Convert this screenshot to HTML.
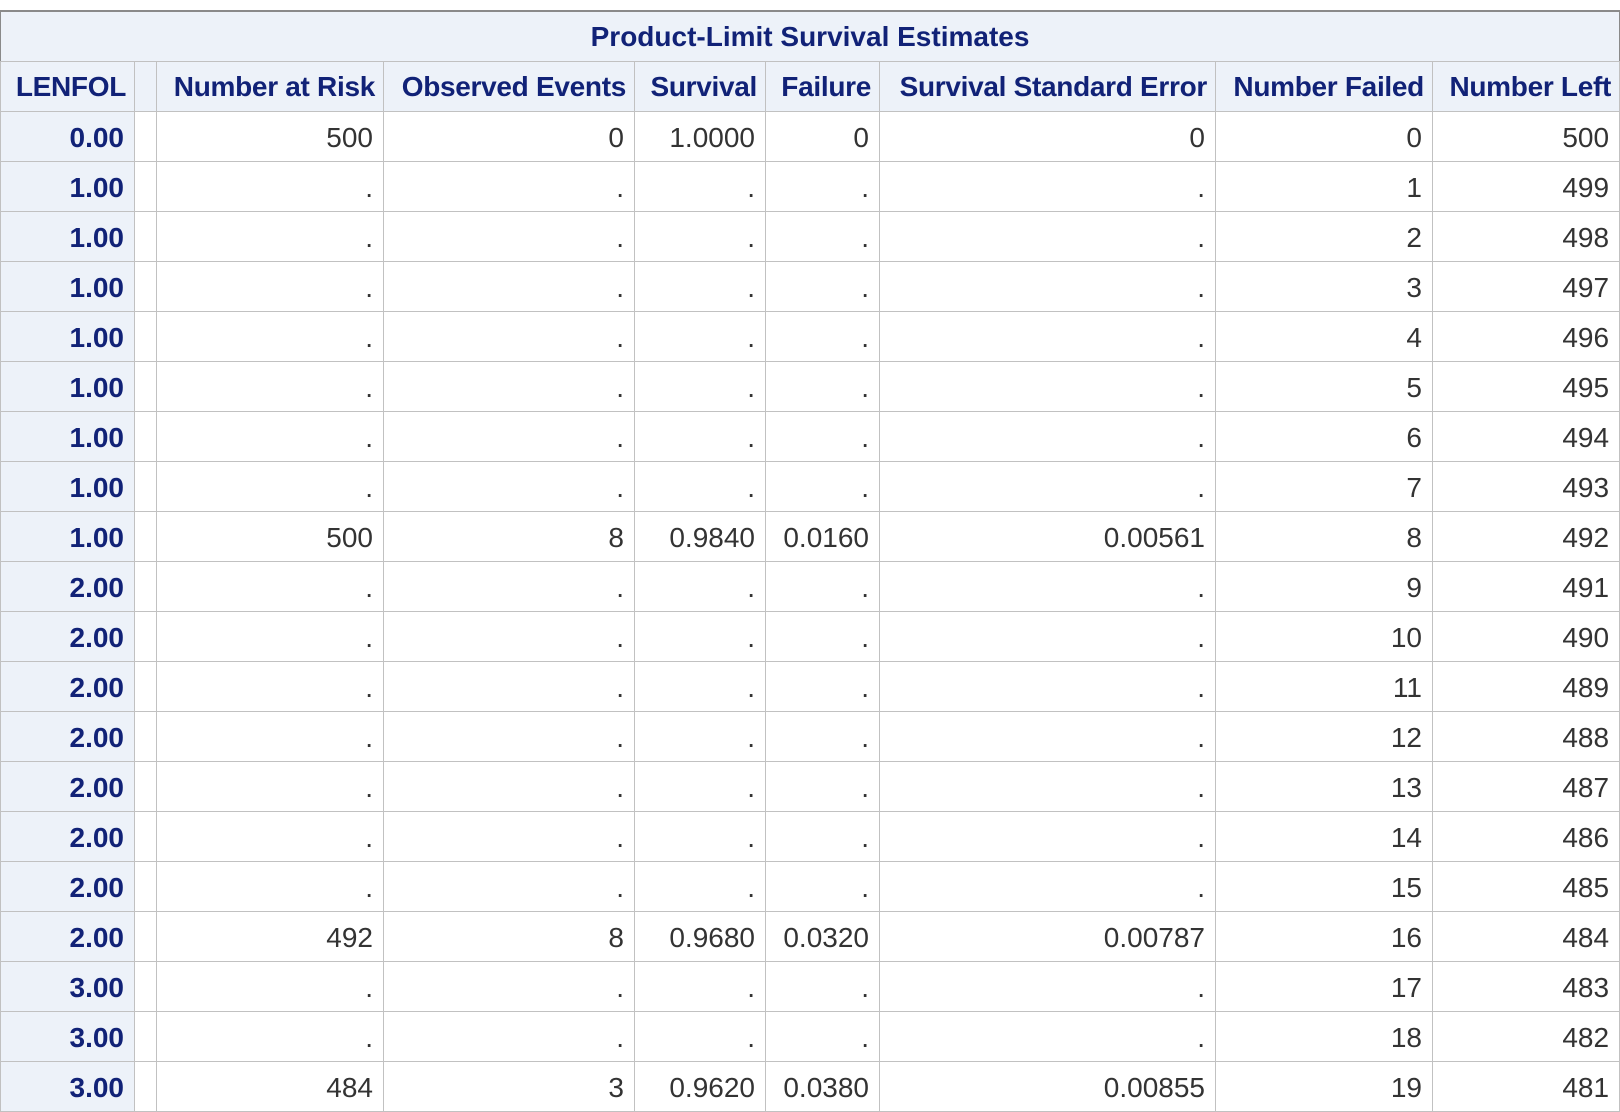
<!DOCTYPE html>
<html><head><meta charset="utf-8"><style>
html,body{margin:0;padding:0;background:#fff;width:1620px;height:1108px;overflow:hidden}
table{position:absolute;left:0;top:10px;border-collapse:collapse;table-layout:fixed;width:1619px;font-family:"Liberation Sans",Arial,sans-serif;font-size:28px}
td,th{border:1px solid #c1c1c1;height:50px;padding:4px 10px 0 0;text-align:right;color:#333;white-space:nowrap;overflow:hidden;box-sizing:border-box}
th{background:#edf2f9;color:#112277;font-weight:bold}
tr.t th{text-align:center;border-top:2px solid #8a8a8a;border-left:1px solid #8a8a8a;border-right:1px solid #8a8a8a;padding:2px 0 0 0}
tr.h th{padding:2px 8px 0 0;letter-spacing:-0.3px}
th.e{padding:0}
</style></head><body>
<table>
<colgroup><col style="width:134px"><col style="width:22px"><col style="width:227px"><col style="width:251px"><col style="width:131px"><col style="width:114px"><col style="width:336px"><col style="width:217px"><col style="width:187px"></colgroup>
<tr class="t"><th colspan="9">Product-Limit Survival Estimates</th></tr>
<tr class="h"><th>LENFOL</th><th class="e"></th><th>Number at Risk</th><th>Observed Events</th><th>Survival</th><th>Failure</th><th>Survival Standard Error</th><th>Number Failed</th><th>Number Left</th></tr>
<tr><th>0.00</th><td></td><td>500</td><td>0</td><td>1.0000</td><td>0</td><td>0</td><td>0</td><td>500</td></tr>
<tr><th>1.00</th><td></td><td>.</td><td>.</td><td>.</td><td>.</td><td>.</td><td>1</td><td>499</td></tr>
<tr><th>1.00</th><td></td><td>.</td><td>.</td><td>.</td><td>.</td><td>.</td><td>2</td><td>498</td></tr>
<tr><th>1.00</th><td></td><td>.</td><td>.</td><td>.</td><td>.</td><td>.</td><td>3</td><td>497</td></tr>
<tr><th>1.00</th><td></td><td>.</td><td>.</td><td>.</td><td>.</td><td>.</td><td>4</td><td>496</td></tr>
<tr><th>1.00</th><td></td><td>.</td><td>.</td><td>.</td><td>.</td><td>.</td><td>5</td><td>495</td></tr>
<tr><th>1.00</th><td></td><td>.</td><td>.</td><td>.</td><td>.</td><td>.</td><td>6</td><td>494</td></tr>
<tr><th>1.00</th><td></td><td>.</td><td>.</td><td>.</td><td>.</td><td>.</td><td>7</td><td>493</td></tr>
<tr><th>1.00</th><td></td><td>500</td><td>8</td><td>0.9840</td><td>0.0160</td><td>0.00561</td><td>8</td><td>492</td></tr>
<tr><th>2.00</th><td></td><td>.</td><td>.</td><td>.</td><td>.</td><td>.</td><td>9</td><td>491</td></tr>
<tr><th>2.00</th><td></td><td>.</td><td>.</td><td>.</td><td>.</td><td>.</td><td>10</td><td>490</td></tr>
<tr><th>2.00</th><td></td><td>.</td><td>.</td><td>.</td><td>.</td><td>.</td><td>11</td><td>489</td></tr>
<tr><th>2.00</th><td></td><td>.</td><td>.</td><td>.</td><td>.</td><td>.</td><td>12</td><td>488</td></tr>
<tr><th>2.00</th><td></td><td>.</td><td>.</td><td>.</td><td>.</td><td>.</td><td>13</td><td>487</td></tr>
<tr><th>2.00</th><td></td><td>.</td><td>.</td><td>.</td><td>.</td><td>.</td><td>14</td><td>486</td></tr>
<tr><th>2.00</th><td></td><td>.</td><td>.</td><td>.</td><td>.</td><td>.</td><td>15</td><td>485</td></tr>
<tr><th>2.00</th><td></td><td>492</td><td>8</td><td>0.9680</td><td>0.0320</td><td>0.00787</td><td>16</td><td>484</td></tr>
<tr><th>3.00</th><td></td><td>.</td><td>.</td><td>.</td><td>.</td><td>.</td><td>17</td><td>483</td></tr>
<tr><th>3.00</th><td></td><td>.</td><td>.</td><td>.</td><td>.</td><td>.</td><td>18</td><td>482</td></tr>
<tr><th>3.00</th><td></td><td>484</td><td>3</td><td>0.9620</td><td>0.0380</td><td>0.00855</td><td>19</td><td>481</td></tr>
</table>
</body></html>
